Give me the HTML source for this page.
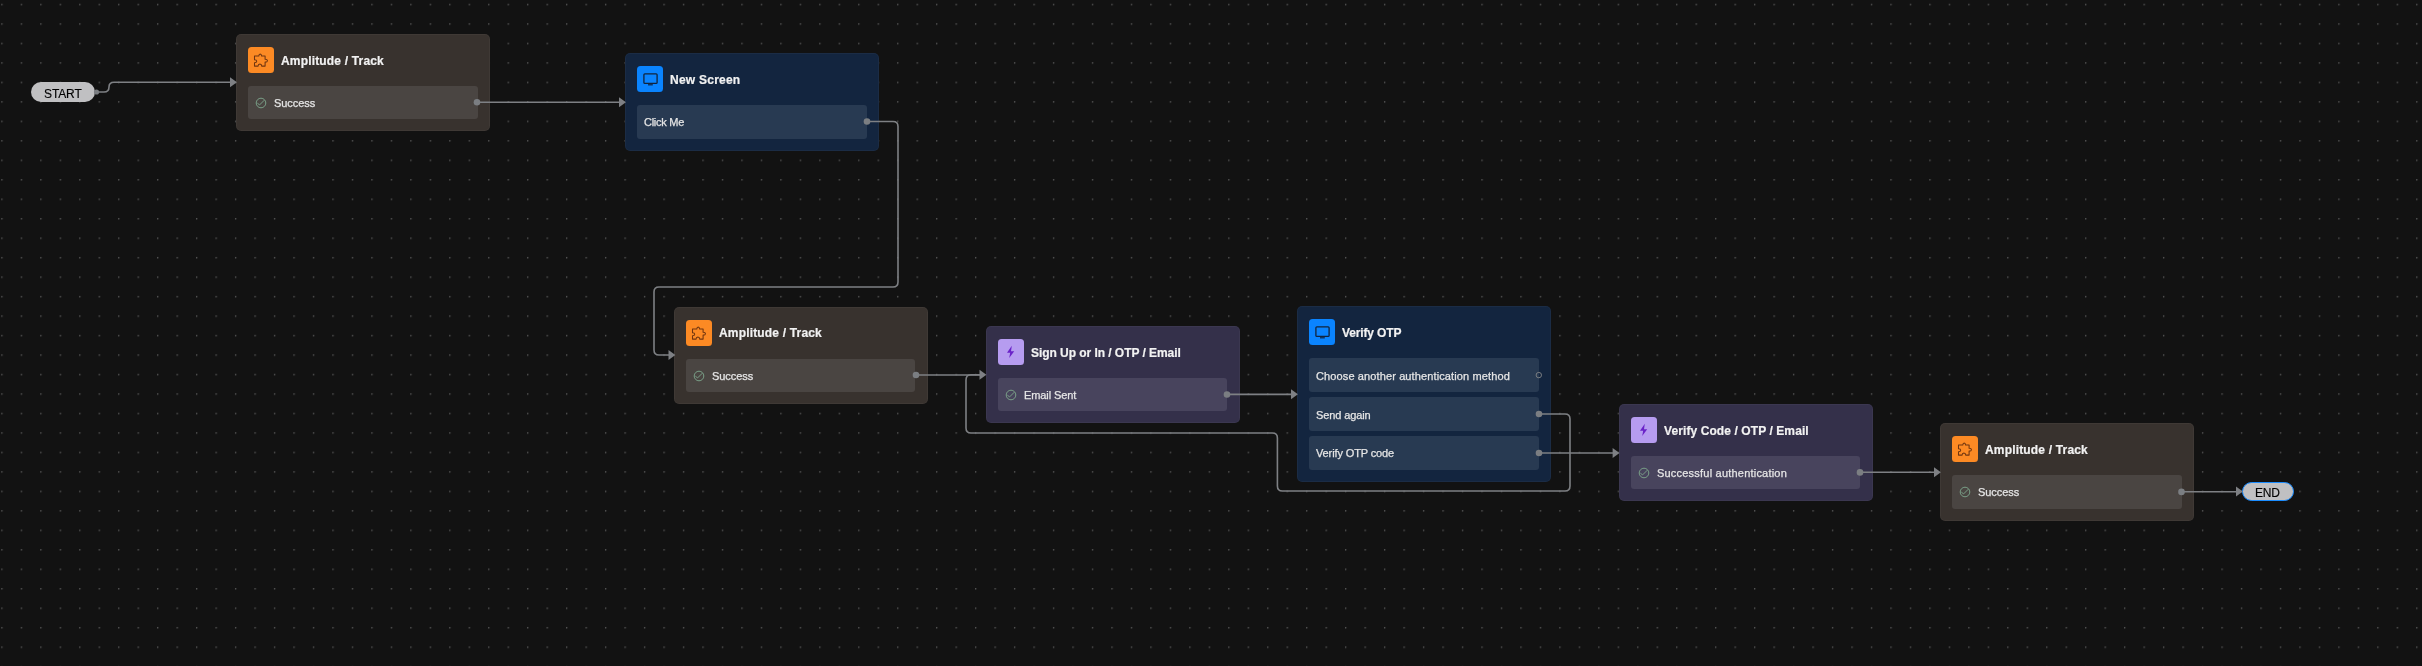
<!DOCTYPE html>
<html><head><meta charset="utf-8"><style>
html,body{margin:0;padding:0;width:2422px;height:666px;overflow:hidden;background:#121212;}
body{position:relative;font-family:"Liberation Sans",sans-serif;}
.n{position:absolute;width:254px;border-radius:5px;box-shadow:inset 0 0 0 1px rgba(255,255,255,0.035);}
.ic{position:absolute;left:12px;top:13px;width:26px;height:26px;border-radius:3.5px;}
.ic svg{position:absolute;left:0;top:0}
.tt{position:absolute;left:45px;top:20.5px;will-change:transform;-webkit-text-stroke:0.2px #f2f2f2;font-weight:bold;font-size:12px;line-height:14px;color:#f2f2f2;white-space:nowrap;}
.r{position:absolute;left:12px;width:229.5px;height:33.3px;border-radius:3px;}
.rt{position:absolute;top:10.5px;will-change:transform;-webkit-text-stroke:0.25px #e6e6e6;font-size:11px;line-height:13px;color:#e6e6e6;white-space:nowrap;}
.pill{position:absolute;border-radius:10px;background:#c0c0c2;box-sizing:border-box;}
.pt{position:absolute;will-change:transform;color:#000000;font-size:12px;line-height:14px;white-space:nowrap;-webkit-text-stroke:0.15px #000000;}
svg.ov{position:absolute;left:0;top:0}
</style></head><body>
<svg class="ov" width="2422" height="666"><defs><pattern id="dp" x="1.25" y="3.75" width="19.475" height="19.475" patternUnits="userSpaceOnUse"><circle cx="0.75" cy="0.75" r="0.62" fill="#939393"/></pattern></defs><rect width="2422" height="666" fill="url(#dp)"/></svg>
<div class="n" style="left:236px;top:33.6px;height:97.3px;background:#38322e"><div class="ic" style="background:#fc8a24"><svg width="26" height="26" viewBox="0 0 26 26"><path d="M6.5 9 H10.8 Q10.9 7 12.2 6.9 Q13.5 7 13.6 9 H17.1 V12.3 Q19.4 12.3 19.5 13.7 Q19.4 15.1 17.1 15.1 V19.1 H13.7 Q13.7 17 11.9 16.9 Q10.1 17 10.1 19.1 H6.5 V15.7 Q8.7 15.7 8.7 14.2 Q8.7 12.7 6.5 12.7 Z" fill="none" stroke="#6f3510" stroke-width="1.05" stroke-linejoin="round"/></svg></div><div class="tt" style="letter-spacing:0.17px;top:20.5px">Amplitude / Track</div><div class="r" style="top:52px;background:#4a4542"><svg width="14" height="14" viewBox="0 0 14 14" style="position:absolute;left:6px;top:10.1px"><circle cx="7" cy="7" r="4.8" fill="none" stroke="#7aa088" stroke-width="1"/><path d="M3.4 7.2 L5.6 8.9 L10.3 4.2" fill="none" stroke="#7aa088" stroke-width="1"/></svg><div class="rt" style="left:26px;letter-spacing:-0.05px;top:11.5px">Success</div></div></div>
<div class="n" style="left:625px;top:53.3px;height:97.3px;background:#13253f"><div class="ic" style="background:#0a84ff"><svg width="26" height="26" viewBox="0 0 26 26"><rect x="6.9" y="7.8" width="13.2" height="9.6" rx="1" fill="none" stroke="#12243d" stroke-width="1.3"/><rect x="11" y="18.2" width="4.8" height="1.2" fill="#12243d"/></svg></div><div class="tt" style="letter-spacing:0.24px;top:19.4px">New Screen</div><div class="r" style="top:52px;background:#283a52"><div class="rt" style="left:7px;letter-spacing:-0.26px;top:10.5px">Click Me</div></div></div>
<div class="n" style="left:673.8px;top:306.5px;height:97.3px;background:#38322e"><div class="ic" style="background:#fc8a24"><svg width="26" height="26" viewBox="0 0 26 26"><path d="M6.5 9 H10.8 Q10.9 7 12.2 6.9 Q13.5 7 13.6 9 H17.1 V12.3 Q19.4 12.3 19.5 13.7 Q19.4 15.1 17.1 15.1 V19.1 H13.7 Q13.7 17 11.9 16.9 Q10.1 17 10.1 19.1 H6.5 V15.7 Q8.7 15.7 8.7 14.2 Q8.7 12.7 6.5 12.7 Z" fill="none" stroke="#6f3510" stroke-width="1.05" stroke-linejoin="round"/></svg></div><div class="tt" style="letter-spacing:0.17px;top:19.4px">Amplitude / Track</div><div class="r" style="top:52px;background:#4a4542"><svg width="14" height="14" viewBox="0 0 14 14" style="position:absolute;left:6px;top:10.1px"><circle cx="7" cy="7" r="4.8" fill="none" stroke="#7aa088" stroke-width="1"/><path d="M3.4 7.2 L5.6 8.9 L10.3 4.2" fill="none" stroke="#7aa088" stroke-width="1"/></svg><div class="rt" style="left:26px;letter-spacing:-0.05px;top:11.5px">Success</div></div></div>
<div class="n" style="left:985.5px;top:326px;height:97.3px;background:#34304a"><div class="ic" style="background:#b69cf0"><svg width="26" height="26" viewBox="0 0 26 26"><path d="M13.8 6.8 L9 13.8 H12.2 L11.2 19 L16.2 12.3 H13 Z" fill="#6a22c8"/></svg></div><div class="tt" style="letter-spacing:-0.05px;top:20.3px">Sign Up or In / OTP / Email</div><div class="r" style="top:52px;background:#48445d"><svg width="14" height="14" viewBox="0 0 14 14" style="position:absolute;left:6px;top:10.1px"><circle cx="7" cy="7" r="4.8" fill="none" stroke="#7aa088" stroke-width="1"/><path d="M3.4 7.2 L5.6 8.9 L10.3 4.2" fill="none" stroke="#7aa088" stroke-width="1"/></svg><div class="rt" style="left:26px;letter-spacing:-0.1px;top:10.5px">Email Sent</div></div></div>
<div class="n" style="left:1297px;top:306.3px;height:175.3px;background:#13253f"><div class="ic" style="background:#0a84ff"><svg width="26" height="26" viewBox="0 0 26 26"><rect x="6.9" y="7.8" width="13.2" height="9.6" rx="1" fill="none" stroke="#12243d" stroke-width="1.3"/><rect x="11" y="18.2" width="4.8" height="1.2" fill="#12243d"/></svg></div><div class="tt" style="letter-spacing:-0.13px;top:19.4px">Verify OTP</div><div class="r" style="top:52px;background:#283a52"><div class="rt" style="left:7px;letter-spacing:0.12px;top:11.8px">Choose another authentication method</div></div><div class="r" style="top:91px;background:#283a52"><div class="rt" style="left:7px;letter-spacing:-0.12px;top:11.5px">Send again</div></div><div class="r" style="top:130px;background:#283a52"><div class="rt" style="left:7px;letter-spacing:-0.12px;top:10.5px">Verify OTP code</div></div></div>
<div class="n" style="left:1618.6px;top:404px;height:97.3px;background:#34304a"><div class="ic" style="background:#b69cf0"><svg width="26" height="26" viewBox="0 0 26 26"><path d="M13.8 6.8 L9 13.8 H12.2 L11.2 19 L16.2 12.3 H13 Z" fill="#6a22c8"/></svg></div><div class="tt" style="letter-spacing:0.09px;top:20.3px">Verify Code / OTP / Email</div><div class="r" style="top:52px;background:#48445d"><svg width="14" height="14" viewBox="0 0 14 14" style="position:absolute;left:6px;top:10.1px"><circle cx="7" cy="7" r="4.8" fill="none" stroke="#7aa088" stroke-width="1"/><path d="M3.4 7.2 L5.6 8.9 L10.3 4.2" fill="none" stroke="#7aa088" stroke-width="1"/></svg><div class="rt" style="left:26px;letter-spacing:0.21px;top:10.5px">Successful authentication</div></div></div>
<div class="n" style="left:1940px;top:423.4px;height:97.3px;background:#38322e"><div class="ic" style="background:#fc8a24"><svg width="26" height="26" viewBox="0 0 26 26"><path d="M6.5 9 H10.8 Q10.9 7 12.2 6.9 Q13.5 7 13.6 9 H17.1 V12.3 Q19.4 12.3 19.5 13.7 Q19.4 15.1 17.1 15.1 V19.1 H13.7 Q13.7 17 11.9 16.9 Q10.1 17 10.1 19.1 H6.5 V15.7 Q8.7 15.7 8.7 14.2 Q8.7 12.7 6.5 12.7 Z" fill="none" stroke="#6f3510" stroke-width="1.05" stroke-linejoin="round"/></svg></div><div class="tt" style="letter-spacing:0.17px;top:19.4px">Amplitude / Track</div><div class="r" style="top:52px;background:#4a4542"><svg width="14" height="14" viewBox="0 0 14 14" style="position:absolute;left:6px;top:10.1px"><circle cx="7" cy="7" r="4.8" fill="none" stroke="#7aa088" stroke-width="1"/><path d="M3.4 7.2 L5.6 8.9 L10.3 4.2" fill="none" stroke="#7aa088" stroke-width="1"/></svg><div class="rt" style="left:26px;letter-spacing:-0.05px;top:10.5px">Success</div></div></div>
<div class="pill" style="left:31px;top:82.2px;width:64px;height:20px;"><span class="pt" style="left:13.1px;top:4.5px;letter-spacing:-0.12px">START</span></div><div class="pill" style="left:2242px;top:482.2px;width:52px;height:19px;border:1.3px solid #1a8cff;"><span class="pt" style="left:12.1px;top:2.6px;letter-spacing:-0.25px">END</span></div>
<svg class="ov" width="2422" height="666">
<path d="M97 92 H104 Q109 92 109 87 Q109 82.3 114 82.3 H231" fill="none" stroke="#7e8084" stroke-width="1.6"/>
<path d="M477 102.3 H620" fill="none" stroke="#7e8084" stroke-width="1.6"/>
<path d="M867 121.5 H893 Q898 121.5 898 126.5 V282 Q898 287 893 287 H659 Q654 287 654 292 V350 Q654 355 659 355 H669" fill="none" stroke="#7e8084" stroke-width="1.6"/>
<path d="M916 375 H980" fill="none" stroke="#7e8084" stroke-width="1.6"/>
<path d="M1227 394.4 H1292" fill="none" stroke="#7e8084" stroke-width="1.6"/>
<path d="M1539 414 H1565 Q1570 414 1570 419 V486 Q1570 491 1565 491 H1282.4 Q1277.4 491 1277.4 486 V438 Q1277.4 433 1272.4 433 H971 Q966 433 966 428 V380 Q966 374.8 971 374.8 H980" fill="none" stroke="#7e8084" stroke-width="1.6"/>
<path d="M1539 453 H1613" fill="none" stroke="#7e8084" stroke-width="1.6"/>
<path d="M1860 472.3 H1935" fill="none" stroke="#7e8084" stroke-width="1.6"/>
<path d="M2181.5 491.8 H2237" fill="none" stroke="#7e8084" stroke-width="1.6"/>
<path d="M236.9 82.3 L230.0 77.3 L230.0 87.3 Z" fill="#7e8084"/>
<path d="M625.9 102.2 L619.0 97.2 L619.0 107.2 Z" fill="#7e8084"/>
<path d="M675.4 355 L668.5 350.0 L668.5 360.0 Z" fill="#7e8084"/>
<path d="M986.4 374.8 L979.5 369.8 L979.5 379.8 Z" fill="#7e8084"/>
<path d="M1297.9 394.2 L1291.0 389.2 L1291.0 399.2 Z" fill="#7e8084"/>
<path d="M1619.5 453 L1612.6 448.0 L1612.6 458.0 Z" fill="#7e8084"/>
<path d="M1940.9 472.2 L1934.0 467.2 L1934.0 477.2 Z" fill="#7e8084"/>
<path d="M2242.9 491.6 L2236.0 486.6 L2236.0 496.6 Z" fill="#7e8084"/>
<circle cx="96.5" cy="92" r="2.6" fill="#7b7e82"/>
<circle cx="477" cy="102.3" r="3.3" fill="#7b7e82"/>
<circle cx="867" cy="121.5" r="3.3" fill="#7b7e82"/>
<circle cx="916" cy="375" r="3.3" fill="#7b7e82"/>
<circle cx="1227" cy="394.5" r="3.3" fill="#7b7e82"/>
<circle cx="1539" cy="414" r="3.3" fill="#7b7e82"/>
<circle cx="1539" cy="453" r="3.3" fill="#7b7e82"/>
<circle cx="1860" cy="472.4" r="3.3" fill="#7b7e82"/>
<circle cx="2181.5" cy="491.9" r="3.3" fill="#7b7e82"/>
<circle cx="1538.8" cy="375.1" r="2.7" fill="none" stroke="#7b7e82" stroke-width="1"/>
</svg>
</body></html>
